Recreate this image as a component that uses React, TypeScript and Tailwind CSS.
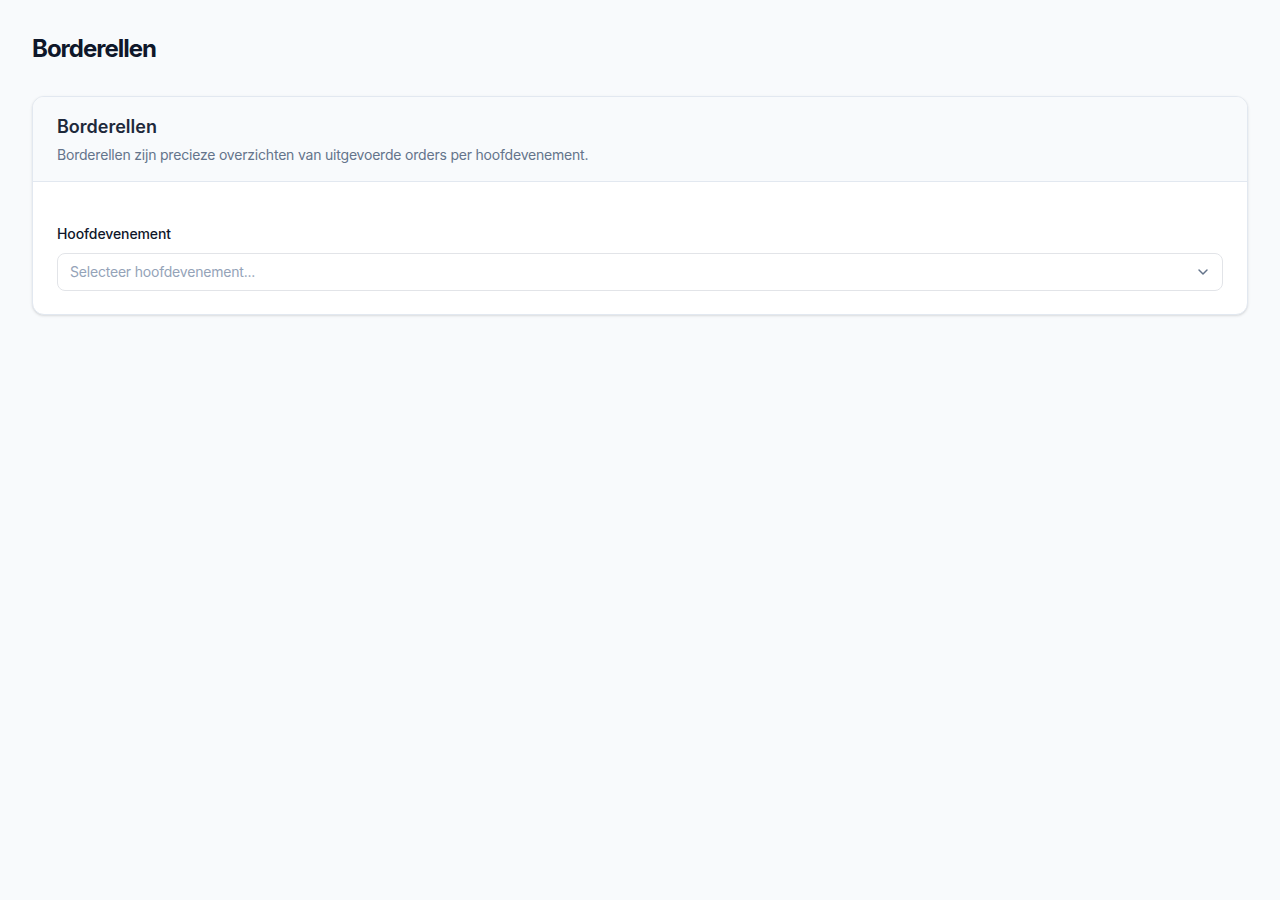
import { ChevronDown } from 'lucide-react';

const App = () => {
  return (
    <div className="min-h-screen bg-[#f8fafc] px-8 pt-[33px] pb-8 font-['Inter',sans-serif]">
      <h1 className="text-2xl font-bold tracking-[-1px] text-[#0f172a] mb-[31px]">Borderellen</h1>

      <div className="bg-white rounded-xl border border-[#e2e8f0] shadow-sm overflow-hidden">
        {/* Header */}
        <div className="bg-[#f8fafc] border-b border-[#e2e8f0] px-6 py-4">
          <h2 className="text-lg font-semibold text-[#1e293b]">Borderellen</h2>
          <p className="text-sm tracking-[-0.2px] text-[#64748b] mt-1">
            Borderellen zijn precieze overzichten van uitgevoerde orders per hoofdevenement.
          </p>
        </div>

        {/* Content */}
        <div className="px-6 pt-[42px] pb-[23px]">
          <label className="block text-sm font-medium tracking-[-0.1px] text-[#0f172a] mb-[9px]">Hoofdevenement</label>
          <button
            type="button"
            className="w-full h-[38px] flex items-center justify-between rounded-lg border border-[#e2e4e8] bg-white pl-3 pr-[11px] text-sm tracking-[-0.2px] text-[#94a3b8]"
          >
            <span>Selecteer hoofdevenement...</span>
            <ChevronDown className="w-4 h-4 text-[#64748b]" strokeWidth={2.2} />
          </button>
        </div>
      </div>
    </div>
  );
};

export default App;
